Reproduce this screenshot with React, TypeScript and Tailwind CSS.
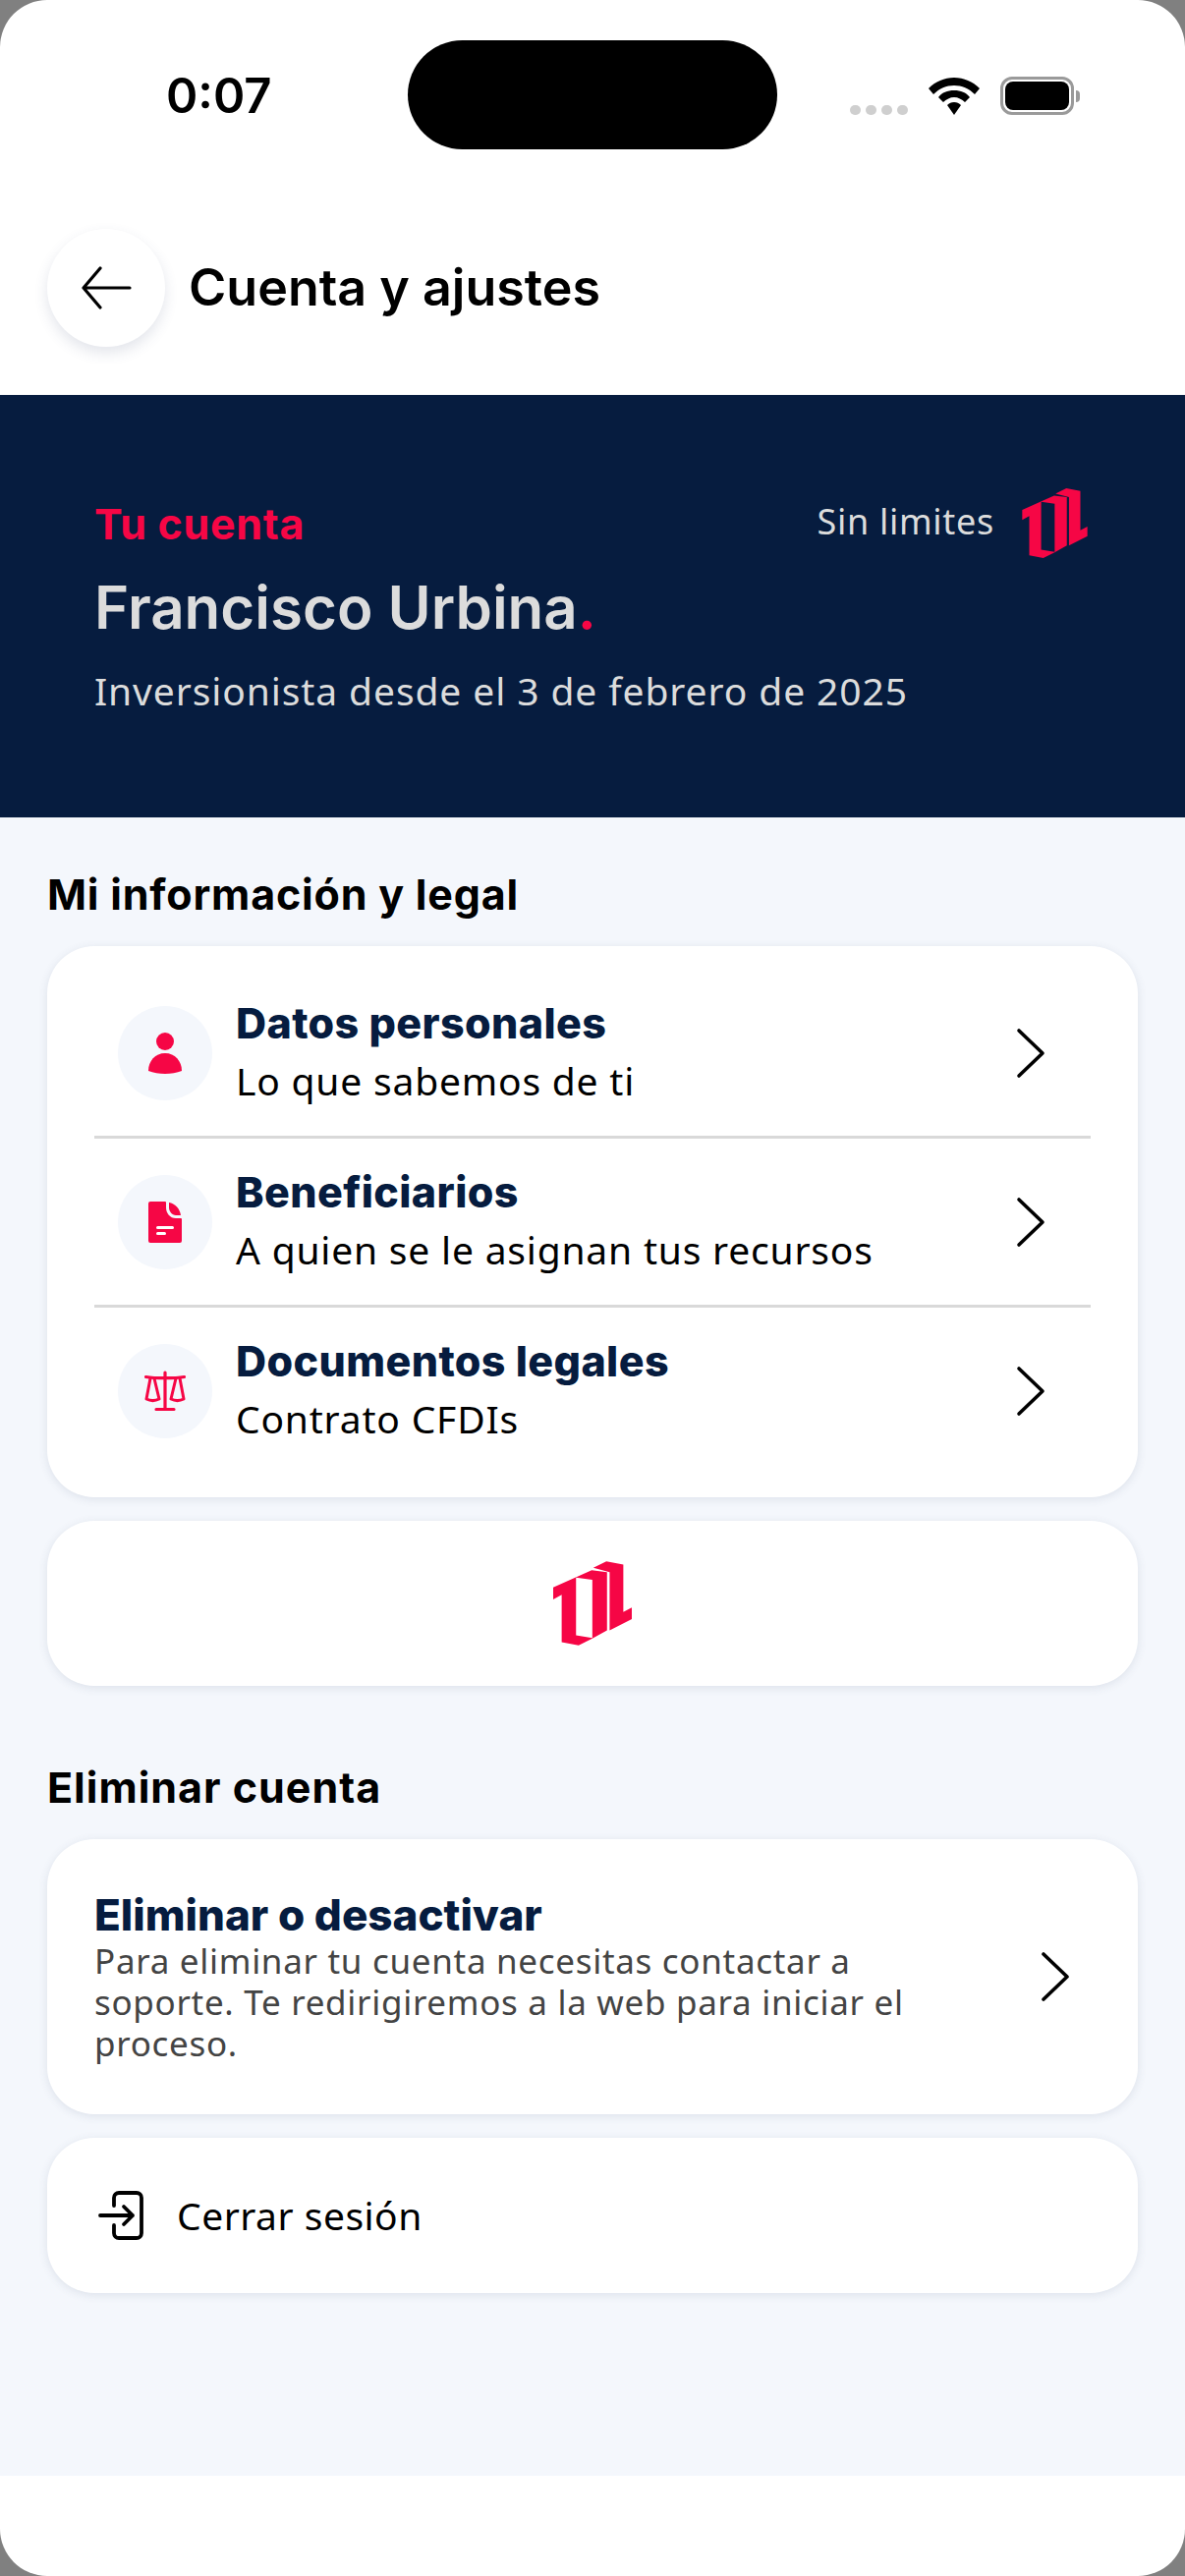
const heading = { fontFamily: "Inter, 'Noto Sans', sans-serif" };

function Logo({ className, hole }: { className: string; hole?: string }) {
  return (
    <svg viewBox="127 85 241 258" className={className}>
      <path fill="#f60645" d="M127 165 245 112 292 118 292 297 247 322 205 343 153 333 153 188 127 202Z" />
      <path fill={hole || "#fff"} d="M197 135 247 142 247 320 197 312Z" />
      <path fill="#f60645" d="M250 105 290 85 342 95 342 240 368 227 368 262 300 297 300 118Z" />
    </svg>
  );
}

function Chevron() {
  return (
    <svg viewBox="0 0 32 52" className="h-[52px] w-[32px]" fill="none" stroke="#000" strokeWidth="3.6" strokeLinecap="round" strokeLinejoin="round">
      <path d="M4 3 28 26 4 49" />
    </svg>
  );
}

function PersonIcon() {
  return (
    <svg viewBox="0 0 48 48" className="h-12 w-12" fill="#f60645">
      <circle cx="24" cy="12" r="9" />
      <path d="M7 42C7 32 14 24 24 24s17 8 17 18C36 44 30 45 24 45S12 44 7 42Z" />
    </svg>
  );
}

function DocIcon() {
  return (
    <svg viewBox="0 0 48 48" className="h-12 w-12">
      <path fill="#f60645" d="M9 3H24a1 1 0 0 1 1 1V9C25 15 29 20 35 20H40a1 1 0 0 1 1 1V43a2 2 0 0 1-2 2H9a2 2 0 0 1-2-2V5a2 2 0 0 1 2-2Z" />
      <path fill="#f60645" d="M28 4C34 5 39 10 40 17H35C31 17 28 13 28 9Z" />
      <rect x="15" y="28" width="18" height="3" rx="1.500" fill="#fff" />
      <rect x="15" y="34" width="10" height="3" rx="1.500" fill="#fff" />
    </svg>
  );
}

function ScaleIcon() {
  return (
    <svg viewBox="0 0 48 48" className="h-12 w-12" fill="none" stroke="#f60645" strokeWidth="3" strokeLinecap="round" strokeLinejoin="round">
      <path d="M24 5v36M15 42.500h18M4.500 9.500c6 1 13 1.200 19.500 1.200S37.500 10.500 43.500 9.500" strokeWidth="3.200" />
      <path d="M9 11 5 32c4 2 9 2 13 0L13 11M35 11l-5 21c4 2 9 2 13 0l-4-21" />
    </svg>
  );
}

function Row({ icon, title, sub, last }: { icon: React.ReactNode; title: string; sub: string; last?: boolean }) {
  return (
    <div className={`flex h-[172px] items-center border-b-[3px] pl-6 pr-[45px] ${last ? "border-transparent" : "border-[#d9d9d9]"}`}>
      <div className="flex h-24 w-24 shrink-0 items-center justify-center rounded-full bg-[#f4f7fc]">{icon}</div>
      <div className="ml-6 flex-1">
        <div className="-mt-[2px] text-[43px] leading-[58px] font-extrabold tracking-[0.4px] text-[#061c3f]" style={heading}>{title}</div>
        <div className="mt-[1px] text-[39px] leading-[58px] tracking-[0.8px] text-black font-['Noto_Sans']">{sub}</div>
      </div>
      <Chevron />
    </div>
  );
}

export default function App() {
  return (
    <div className="h-[2622px] w-[1206px] bg-[#808080]">
      <div className="flex h-full flex-col overflow-hidden rounded-[48px] bg-white">
        <div className="flex h-[233px] shrink-0 items-start">
          <div className="mt-[70px] ml-[169px] w-[246px] text-[49px] leading-[56px] font-semibold text-black" style={heading}>0:07</div>
          <div className="mt-[41px] h-[111px] w-[376px] rounded-[56px] bg-black" />
          <div className="mt-[78px] ml-[74px] flex items-center">
            <div className="mt-[28px] flex gap-[5px]">
              <div className="h-[10px] w-[11px] rounded-full bg-[#cfcfcf]" />
              <div className="h-[10px] w-[11px] rounded-full bg-[#cfcfcf]" />
              <div className="h-[10px] w-[11px] rounded-full bg-[#cfcfcf]" />
              <div className="h-[10px] w-[11px] rounded-full bg-[#cfcfcf]" />
            </div>
            <svg viewBox="0 0 52 38" className="ml-[21px] h-[38px] w-[52px]" fill="#000">
              <path d="M26 0C16 0 7 4 0 11l5 6c6-6 13-9 21-9s15 3 21 9l5-6C45 4 36 0 26 0Z" />
              <path d="M26 13c-7 0-12 2-16 7l5 5c3-3 7-5 11-5s8 2 11 5l5-5c-4-5-9-7-16-7Z" />
              <path d="M26 25c-3 0-5 1-7 3l7 10 7-10c-2-2-4-3-7-3Z" />
            </svg>
            <div className="ml-[21px] flex items-center">
              <div className="flex h-[39px] w-[75px] items-center justify-center rounded-[12px] border-[3px] border-[#9a9a9a]">
                <div className="h-[29px] w-[65px] rounded-[8px] bg-black" />
              </div>
              <div className="ml-[2px] h-[12px] w-[4px] rounded-r-full bg-[#9a9a9a]" />
            </div>
          </div>
        </div>

        <div className="flex h-[169px] shrink-0 items-start">
          <div className="ml-12 flex h-[120px] w-[120px] items-center justify-center rounded-full bg-white shadow-[0_6px_14px_rgba(60,70,110,0.14)]">
            <svg viewBox="0 0 52 44" className="h-[44px] w-[52px]" fill="none" stroke="#000" strokeWidth="3.200" strokeLinecap="round" strokeLinejoin="round">
              <path d="M50 22H3M20 2 3 22l17 20" />
            </svg>
          </div>
          <div className="mt-[28px] ml-6 text-[52px] leading-[64px] font-semibold text-black" style={heading}>Cuenta y ajustes</div>
        </div>

        <div className="h-[430px] shrink-0 bg-[#061c3f] pt-[119px] pr-[98px] pl-[96px]">
          <div className="flex items-start justify-between">
            <div className="mt-[-18px] text-[43px] leading-[60px] font-bold tracking-[0.7px] text-[#f60645]" style={heading}>Tu cuenta</div>
            <div className="mt-[-24px] flex items-center">
              <span className="-mt-[3px] text-[36px] tracking-[0.7px] text-[#dcdcdc] font-['Noto_Sans']">Sin limites</span>
              <Logo className="ml-[27px] h-[71px] w-[69px]" hole="#061c3f" />
            </div>
          </div>
          <div className="mt-[10px] text-[60px] leading-[80px] font-semibold text-[#dcdcdc]" style={heading}>
            Francisco Urbina<span className="text-[#f60645]">.</span>
          </div>
          <div className="mt-[17px] text-[39px] leading-[56px] tracking-[0.9px] text-[#dcdcdc] font-['Noto_Sans']">Inversionista desde el 3 de febrero de 2025</div>
        </div>

        <div className="h-[1688px] shrink-0 bg-[#f4f7fc] px-12 pt-[48px]">
          <div className="text-[43px] leading-[60px] font-bold tracking-[0.8px] text-black" style={heading}>Mi información y legal</div>
          <div className="mt-[23px] h-[561px] rounded-[48px] bg-white px-12 py-6 shadow-[0_2px_10px_rgba(60,70,110,0.12)]">
            <Row icon={<PersonIcon />} title="Datos personales" sub="Lo que sabemos de ti" />
            <Row icon={<DocIcon />} title="Beneficiarios" sub="A quien se le asignan tus recursos" />
            <Row icon={<ScaleIcon />} title="Documentos legales" sub="Contrato CFDIs" last />
          </div>
          <div className="mt-6 flex h-[168px] items-center justify-center rounded-[48px] bg-white shadow-[0_2px_10px_rgba(60,70,110,0.12)]">
            <Logo className="h-[86px] w-[80px]" />
          </div>
          <div className="mt-[73px] text-[43px] leading-[60px] font-bold tracking-[1px] text-black" style={heading}>Eliminar cuenta</div>
          <div className="mt-[23px] flex h-[280px] items-center rounded-[48px] bg-white pr-[68px] pl-12 shadow-[0_2px_10px_rgba(60,70,110,0.12)]">
            <div className="flex-1">
              <div className="text-[44px] leading-[52px] font-extrabold text-[#061c3f]" style={heading}>Eliminar o desactivar</div>
              <div className="w-[880px] text-[35px] leading-[42px] tracking-[0.7px] text-[#444] font-['Noto_Sans']">Para eliminar tu cuenta necesitas contactar a soporte. Te redirigiremos a la web para iniciar el proceso.</div>
            </div>
            <Chevron />
          </div>
          <div className="mt-6 flex h-[158px] items-center rounded-[48px] bg-white pl-[52px] shadow-[0_2px_10px_rgba(60,70,110,0.12)]">
            <svg viewBox="0 0 46 50" className="h-[50px] w-[46px]" fill="none" stroke="#000" strokeWidth="3.800" strokeLinecap="round" strokeLinejoin="round">
              <path d="M16 15V7a5 5 0 0 1 5-5h18a5 5 0 0 1 5 5v36a5 5 0 0 1-5 5H21a5 5 0 0 1-5-5v-8" />
              <path d="M2 25h33M26 16l9 9-9 9" />
            </svg>
            <span className="ml-[34px] text-[39px] tracking-[0.5px] text-black font-['Noto_Sans']">Cerrar sesión</span>
          </div>
        </div>
      </div>
    </div>
  );
}
